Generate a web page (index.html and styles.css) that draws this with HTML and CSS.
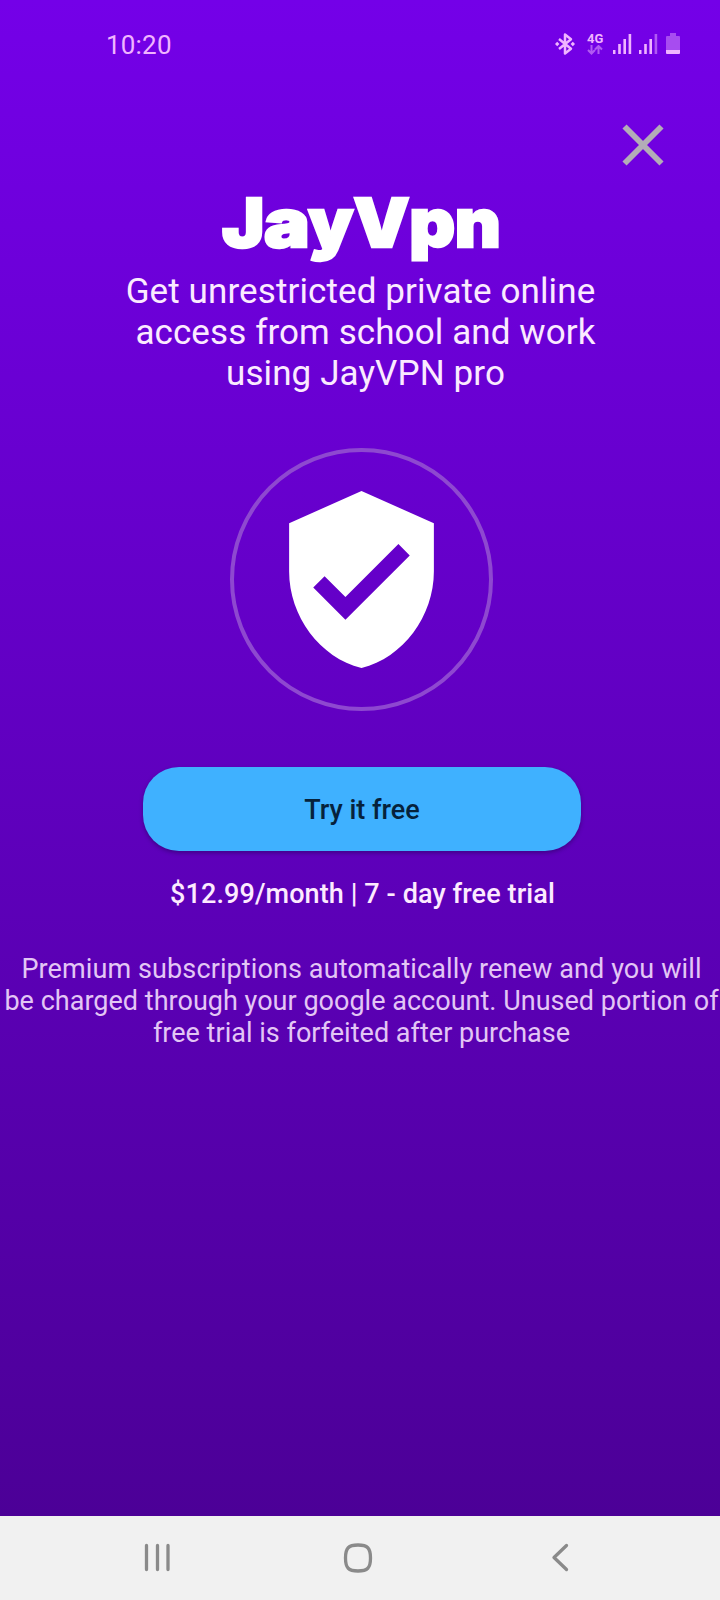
FILE: index.html
```html
<!DOCTYPE html>
<html lang="en">
<head>
<meta charset="utf-8">
<title>JayVpn</title>
<link rel="stylesheet" href="styles.css">
</head>
<body>
<div class="phone">
  <header class="status">
    <span class="clock">10:20</span>
    <div class="indicators">
      <svg class="bluetooth" viewBox="0 0 20 24" width="20" height="24"><path d="M4 7l12 9.800-6 4.700v-19l6 4.700L4 17" fill="none" stroke="currentColor" stroke-width="2.500" stroke-linejoin="round"/><path d="M2.200 9.700L0 12l2.200 2.300L4.400 12zM17.800 9.700L15.600 12l2.200 2.300L20 12z" fill="currentColor"/></svg>
      <div class="network">
        <span class="network-type">4G</span>
        <svg viewBox="0 0 16 10" width="16" height="10"><path d="M4.500 0v8M1 5l3.500 3.500L8 5M11.500 9V1M8 4.500L11.500 1 15 4.500" fill="none" stroke="currentColor" stroke-width="2"/></svg>
      </div>
      <svg class="signal" viewBox="0 0 19 20" width="19" height="20"><path d="M0 16h2.500v4H0zM5.200 10h2.600v10H5.200zM10.400 5H13v15h-2.600zM15.600 0h2.600v20h-2.600z" fill="currentColor"/></svg>
      <svg class="signal" viewBox="0 0 19 20" width="19" height="20"><path d="M0 16h2.500v4H0zM5.200 10h2.600v10H5.200zM10.400 5H13v15h-2.600z" fill="currentColor"/><path d="M15.600 0h2.600v20h-2.600z" fill="currentColor" opacity=".5"/></svg>
      <svg class="battery" viewBox="0 0 14 22" width="14" height="22"><path d="M4 0h6v3h3q1 0 1 1v13H0V4q0-1 1-1h3z" fill="currentColor" opacity=".42"/><path d="M0 17h14v3q0 1-1 1H1q-1 0-1-1z" fill="currentColor"/></svg>
    </div>
  </header>

  <button class="close" aria-label="Close"><svg viewBox="0 0 42 42" width="42" height="42"><path d="M2.500 2.500l37 37M39.500 2.500l-37 37" stroke="currentColor" stroke-width="5.800"/></svg></button>

  <main class="offer">
    <h1 class="brand">J<span class="wide">a</span>yVpn</h1>
    <p class="pitch"><span>Get unrestricted private online</span><span class="indent">access from school and work</span><span class="indent last">using JayVPN pro</span></p>
    <div class="badge"><svg viewBox="0 0 24 24" width="193" height="193"><path fill="#fff" d="M12 1L3 5v6c0 5.550 3.840 10.740 9 12 5.160-1.260 9-6.450 9-12V5l-9-4zm-2 16l-4-4 1.410-1.410L10 14.170l6.590-6.590L18 9l-8 8z"/></svg></div>
    <button class="try">Try it free</button>
    <p class="price">$12.99/month | 7 - day free trial</p>
    <p class="terms"><span>Premium subscriptions automatically renew and you will</span><span class="tight">be charged through your google account. Unused portion of</span><span class="tight">free trial is forfeited after purchase</span></p>
  </main>

  <nav class="navbar">
    <svg viewBox="0 0 26 30" width="26" height="30"><path d="M2.500 2.500v24M13.500 2.500v24M24 2.500v24" stroke="currentColor" stroke-width="3.300" stroke-linecap="round"/></svg>
    <svg class="home" viewBox="0 0 30 30" width="30" height="30"><path d="M15 2C24.500 2 27.500 5 27.500 15S24.500 28 15 28 2.500 25 2.500 15 5.500 2 15 2z" fill="none" stroke="currentColor" stroke-width="3.300"/></svg>
    <svg viewBox="0 0 18 30" width="18" height="30"><path d="M15.500 2.500L3 14.500l12.500 12" fill="none" stroke="currentColor" stroke-width="3.300" stroke-linecap="round" stroke-linejoin="round"/></svg>
  </nav>
</div>
</body>
</html>
```
FILE: styles.css
```css
* { box-sizing: border-box; }
body { margin: 0; font-family: Roboto, "Noto Sans", sans-serif; }
h1, p { margin: 0; font-weight: 400; }
button { border: 0; padding: 0; background: none; font-family: inherit; }
svg { display: block; flex: none; }

.phone {
  width: 720px;
  height: 1600px;
  display: flex;
  flex-direction: column;
  overflow: hidden;
  background: linear-gradient(#7400e8 0, #4c0097 1516px);
}

.status {
  height: 89px;
  padding: 0 40px 0 106px;
  display: flex;
  justify-content: space-between;
  align-items: center;
  color: #f0b4ff;
}
.clock { padding-top: 1px; font-size: 26px; letter-spacing: .2px; }
.indicators { display: flex; align-items: center; padding-bottom: 2px; }
.bluetooth { margin-right: 13px; }
.network { width: 17px; margin: 0 9px 0 -1px; }
.network svg { opacity: .5; }
.network-type { display: block; font-size: 13px; font-weight: 700; line-height: 13px; }
.signal { margin-right: 7px; }
.battery { margin-left: 1px; }

.close {
  align-self: flex-end;
  margin: 35px 56px 0 0;
  height: 42px;
  color: #b3adb7;
}

.offer {
  flex: 1;
  display: flex;
  flex-direction: column;
  align-items: center;
}
.brand {
  margin: 15px 0 0 3px;
  height: 92px;
  font: 900 67px/84px Inter, Roboto, sans-serif;
  color: #fff;
  -webkit-text-stroke: 2.4px #fff;
  transform: scaleX(1.06);
}
.wide { display: inline-block; margin: 0 1px; transform: scaleX(1.08); }
.brand { letter-spacing: -.3px; }
.pitch {
  margin: -2px 0 0 1px;
  display: flex;
  flex-direction: column;
  align-items: center;
  font-size: 35px;
  line-height: 41px;
  letter-spacing: .1px;
  color: #fbeaff;
}
.indent { padding-left: 10px; }
.badge {
  width: 263px;
  height: 263px;
  margin: 54px 0 0 3px;
  display: grid;
  place-items: center;
  border: 4px solid #8e48d0;
  border-radius: 50%;
}
.badge svg { margin: -1px; }
.try {
  width: 438px;
  height: 84px;
  margin: 56px 0 0 4px;
  padding-top: 2px;
  border-radius: 36px;
  background: #3fb1ff;
  box-shadow: 0 2px 4px rgba(20, 0, 60, .4);
  font-size: 27px;
  font-weight: 500;
  color: #06223b;
}
.price {
  margin: 27px 0 0 5px;
  font-size: 27px;
  line-height: 32px;
  font-weight: 500;
  letter-spacing: .1px;
  color: #fdeaff;
}
.terms {
  margin: 43px 0 0 3px;
  display: flex;
  flex-direction: column;
  align-items: center;
  font-size: 27px;
  line-height: 32px;
  letter-spacing: .11px;
  white-space: nowrap;
  color: #e3c6f5;
}
.tight { letter-spacing: .02px; }

.navbar {
  height: 84px;
  padding: 0 151px 0 144px;
  display: flex;
  justify-content: space-between;
  align-items: center;
  background: #f1f1f1;
  color: #8a8a8a;
}
.home { margin-right: 5px; }
```
